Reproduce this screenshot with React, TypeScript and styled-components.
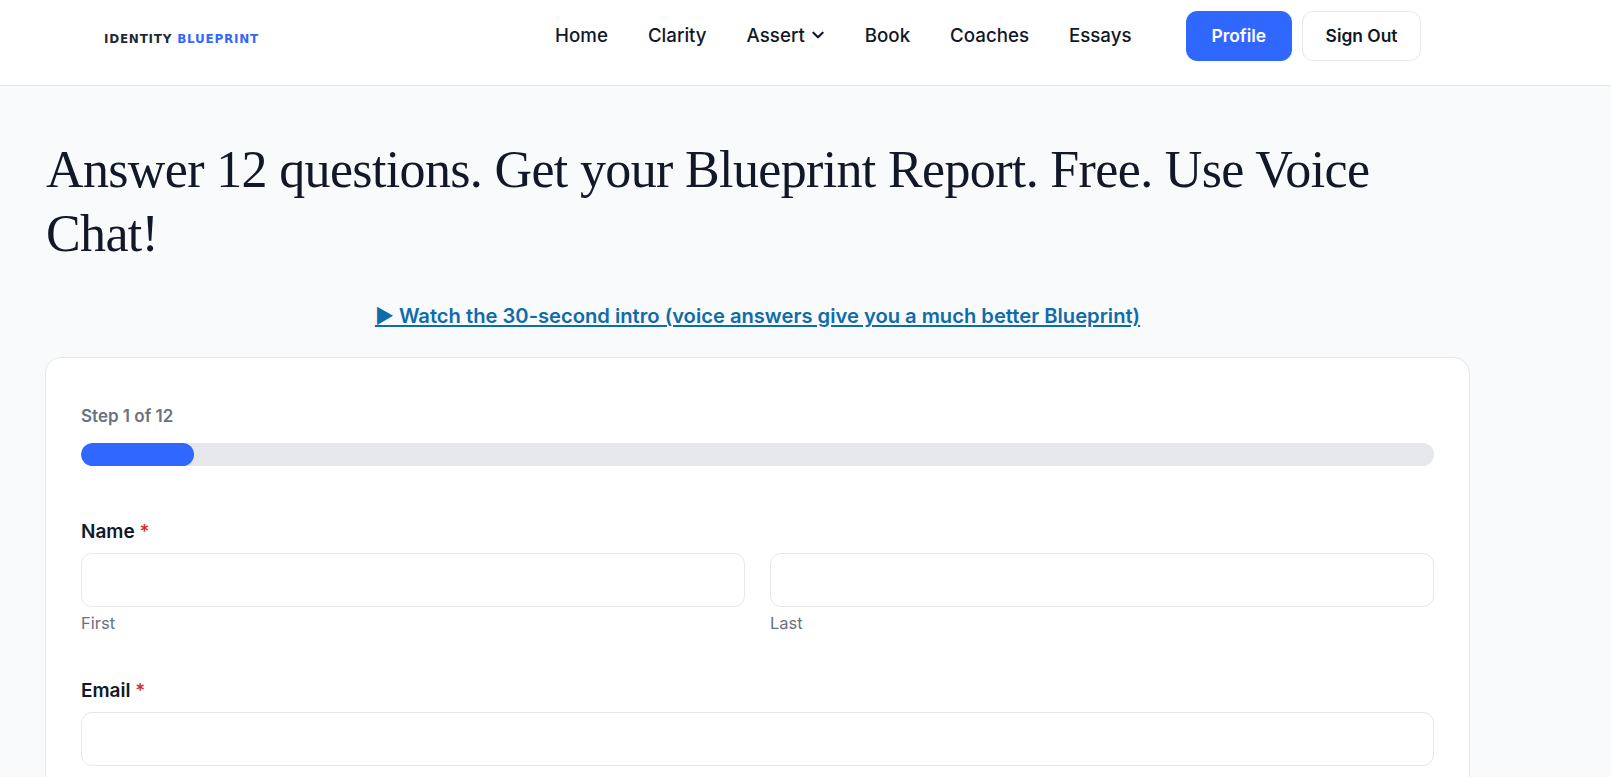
import React from "react";
import styled, { createGlobalStyle } from "styled-components";

const Global = createGlobalStyle`
  html, body { margin: 0; padding: 0; height: 100%; overflow: hidden; }
  body { background: #f9fafb; font-family: Inter, "Liberation Sans", sans-serif; color: #111827; }
  * { box-sizing: border-box; }
`;

const Header = styled.header`
  height: 86px;
  background: #fff;
  border-bottom: 1px solid #e5e7eb;
  display: flex;
  align-items: flex-start;
  padding: 11px 190px 0 104px;
`;

const Logo = styled.a`
  font-family: "DejaVu Sans", sans-serif;
  font-size: 12px;
  font-weight: 700;
  letter-spacing: 0.75px;
  line-height: 16px;
  color: #1f2937;
  margin-top: 20px;
  white-space: nowrap;
`;

const LogoAccent = styled.span`
  color: #3366ff;
`;

const Nav = styled.nav`
  margin-left: auto;
  display: flex;
  align-items: center;
  height: 50px;
  gap: 40px;
`;

const NavItem = styled.a`
  font-size: 18.7px;
  font-weight: 500;
  color: #111827;
  display: inline-flex;
  align-items: center;
  gap: 6px;
  margin-top: -2px;
`;

const Actions = styled.div`
  display: flex;
  gap: 10px;
  margin-left: 54px;
`;

const Button = styled.button<{ $primary?: boolean }>`
  height: 50px;
  border-radius: 11px;
  font: 600 17.4px Inter, "Liberation Sans", sans-serif;
  padding: 0 ${p => (p.$primary ? 25 : 22.5)}px 2px;
  background: ${p => (p.$primary ? "#2f67ff" : "#fff")};
  color: ${p => (p.$primary ? "#fff" : "#111827")};
  border: 1px solid ${p => (p.$primary ? "#2f67ff" : "#e5e7eb")};
`;

const Main = styled.main`
  width: 1425px;
  margin-left: 45px;
`;

const Title = styled.h1`
  margin: 52px 0 0;
  padding-left: 1px;
  font-family: "Liberation Serif", serif;
  font-size: 52px;
  font-weight: 400;
  letter-spacing: -0.65px;
  line-height: 64px;
  color: #111827;
`;

const Intro = styled.a`
  display: block;
  margin-top: 36px;
  text-align: center;
  font-size: 20.16px;
  font-weight: 600;
  line-height: 27px;
  color: #0f6cab;
  text-decoration: underline;
`;

const Card = styled.section`
  margin-top: 28px;
  background: #fff;
  border: 1px solid #e5e7eb;
  border-radius: 16px;
  padding: 46px 35px 40px;
`;

const StepLabel = styled.div`
  font-size: 17px;
  font-weight: 600;
  line-height: 24px;
  color: #6b7280;
`;

const Track = styled.div`
  margin-top: 15px;
  height: 23px;
  border-radius: 12px;
  background: #e5e7eb;
  overflow: hidden;
`;

const Fill = styled.div`
  height: 100%;
  border-radius: 12px;
  background: #2f67ff;
`;

const Field = styled.div<{ $top: number }>`
  margin-top: ${p => p.$top}px;
`;

const FieldLabel = styled.label`
  display: block;
  font-size: 19px;
  font-weight: 600;
  line-height: 28px;
  padding-top: 1px;
  margin-bottom: 7px;
  color: #111827;
`;

const Required = styled.span`
  color: #dc2626;
  font-weight: 500;
`;

const Row = styled.div`
  display: grid;
  grid-template-columns: 1fr 1fr;
  gap: 25px;
`;

const Input = styled.input`
  display: block;
  width: 100%;
  height: 54px;
  border: 1px solid #e5e7eb;
  border-radius: 11px;
  background: #fff;
  outline: none;
`;

const Hint = styled.div`
  margin-top: 4px;
  font-size: 16.5px;
  line-height: 24px;
  color: #6b7280;
`;

const progress = (1 / 12) * 100;

export default function App() {
  return (
    <>
      <Global />
      <Header>
        <Logo>IDENTITY <LogoAccent>BLUEPRINT</LogoAccent></Logo>
        <Nav>
          <NavItem>Home</NavItem>
          <NavItem>Clarity</NavItem>
          <NavItem>
            Assert
            <svg width="14" height="14" viewBox="0 0 24 24" fill="none" stroke="#111827" strokeWidth="3.6" strokeLinecap="round" strokeLinejoin="round">
              <path d="M4 8l8 8 8-8" />
            </svg>
          </NavItem>
          <NavItem>Book</NavItem>
          <NavItem>Coaches</NavItem>
          <NavItem>Essays</NavItem>
        </Nav>
        <Actions>
          <Button $primary>Profile</Button>
          <Button>Sign Out</Button>
        </Actions>
      </Header>
      <Main>
        <Title>Answer 12 questions. Get your Blueprint Report. Free. Use Voice Chat!</Title>
        <Intro>▶ Watch the 30-second intro (voice answers give you a much better Blueprint)</Intro>
        <Card>
          <StepLabel>Step 1 of 12</StepLabel>
          <Track><Fill style={{ width: `${progress}%` }} /></Track>
          <Field $top={51}>
            <FieldLabel>Name <Required>*</Required></FieldLabel>
            <Row>
              <div>
                <Input />
                <Hint>First</Hint>
              </div>
              <div>
                <Input />
                <Hint>Last</Hint>
              </div>
            </Row>
          </Field>
          <Field $top={41}>
            <FieldLabel>Email <Required>*</Required></FieldLabel>
            <Input />
          </Field>
        </Card>
      </Main>
    </>
  );
}
